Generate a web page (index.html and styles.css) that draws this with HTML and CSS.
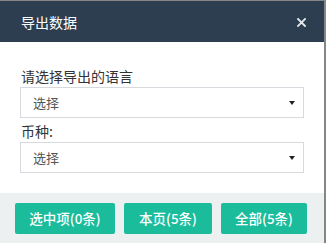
FILE: index.html
```html
<!DOCTYPE html>
<html lang="zh-CN">
<head>
<meta charset="utf-8">
<title>导出数据</title>
<link rel="stylesheet" href="styles.css">
</head>
<body>
<div class="modal">
  <div class="modal-header">
    <span class="modal-title">导出数据</span>
    <span class="modal-close" aria-label="关闭">
      <svg width="9" height="9" viewBox="0 0 9 9"><path d="M1 1L8 8M8 1L1 8" stroke="#e6e9ec" stroke-width="1.8" stroke-linecap="square" fill="none"/></svg>
    </span>
  </div>
  <div class="modal-body">
    <div class="field-label">请选择导出的语言</div>
    <div class="select">
      <span class="select-text">选择</span>
      <span class="caret"></span>
    </div>
    <div class="field-label second">币种:</div>
    <div class="select">
      <span class="select-text">选择</span>
      <span class="caret"></span>
    </div>
  </div>
  <div class="modal-footer">
    <button class="btn btn-selected">选中项(0条)</button>
    <button class="btn btn-page">本页(5条)</button>
    <button class="btn btn-all">全部(5条)</button>
  </div>
</div>
</body>
</html>
```

FILE: styles.css
```css
html, body {
  margin: 0;
  padding: 0;
  background: #858687;
  height: 100%;
  overflow: hidden;
}

body {
  font-family: "Noto Sans CJK SC", "Noto Sans", "Liberation Sans", sans-serif;
}

.modal {
  margin-top: 1px;
  width: 324px;
  height: 242px;
  background: #ffffff;
  display: flex;
  flex-direction: column;
}

.modal-header {
  height: 41px;
  flex: none;
  background: #2c3e50;
  display: flex;
  align-items: center;
  justify-content: space-between;
  padding: 0 18px 0 21px;
}

.modal-title {
  color: #ffffff;
  font-size: 14px;
  line-height: 20px;
}

.modal-close {
  display: flex;
  width: 9px;
  height: 9px;
  margin-top: 1px;
}

.modal-body {
  flex: none;
  padding: 24px 20px 20px 20px;
}

.field-label {
  font-size: 14px;
  line-height: 21px;
  color: #333333;
  padding-left: 1px;
}

.field-label.second {
  margin-top: 3px;
}

.select {
  box-sizing: border-box;
  height: 31px;
  width: 284px;
  border: 1px solid #d6d9dd;
  display: flex;
  align-items: center;
  justify-content: space-between;
  padding: 0 8px 0 12px;
}

.select-text {
  font-size: 13px;
  color: #555555;
  line-height: 20px;
}

.caret {
  width: 0;
  height: 0;
  border-left: 3.5px solid transparent;
  border-right: 3.5px solid transparent;
  border-top: 4px solid #222222;
  margin-top: 1px;
}

.modal-footer {
  flex: 1;
  background: #ecf0f1;
  display: flex;
  align-items: flex-start;
  gap: 9px;
  padding: 10px 0 0 15px;
}

.btn {
  height: 31px;
  border: none;
  border-radius: 2px;
  background: #1abc9c;
  color: #ffffff;
  font-family: "Noto Sans CJK SC", "Noto Sans", sans-serif;
  font-size: 13.5px;
  font-weight: 500;
  padding: 0;
  line-height: 31px;
}

.btn-selected { width: 100px; }
.btn-page { width: 88px; }
.btn-all { width: 86px; }
```
